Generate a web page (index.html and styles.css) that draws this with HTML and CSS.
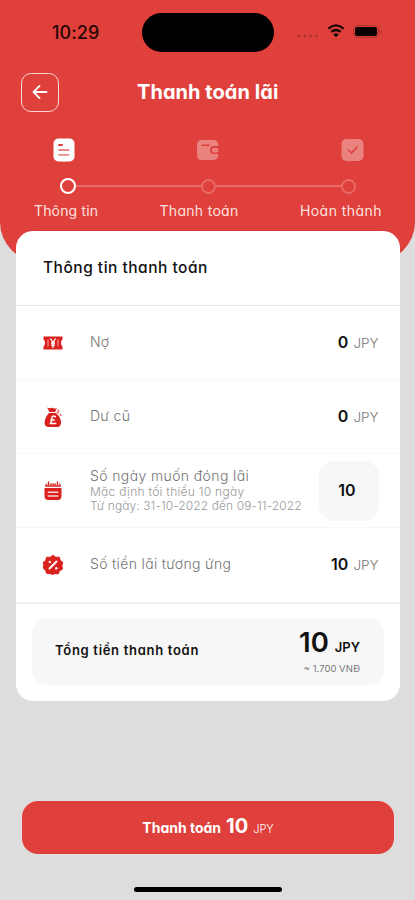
FILE: index.html
```html
<!DOCTYPE html>
<html lang="vi">
<head>
<meta charset="utf-8">
<title>Thanh toán lãi</title>
<link rel="stylesheet" href="styles.css">
</head>
<body>
<div class="screen">
  <header class="header">
    <div class="status">
      <span class="clock">10:29</span>
      <span class="island"></span>
      <span class="signals">
        <svg width="22" height="4" viewBox="0 0 22 4" fill="#a8302c"><circle cx="2" cy="2" r="1.3"/><circle cx="8" cy="2" r="1.3"/><circle cx="13.500" cy="2" r="1.300"/><circle cx="19.500" cy="2" r="1.300"/></svg>
        <svg class="wifi" width="18" height="14" viewBox="0 0 18 14" fill="none" stroke="#190605" stroke-width="2.300"><path d="M1.300 4.600Q9-1.800 16.700 4.600"/><path d="M4.200 7.900Q9 4 13.800 7.900"/><path d="M9 13.200 6.300 10.400Q9 8.300 11.700 10.400Z" fill="#190605" stroke="none"/></svg>
        <svg class="battery" width="29" height="13" viewBox="0 0 29 13"><rect x=".6" y=".6" width="24.800" height="11.800" rx="3.800" fill="none" stroke="#b53431" stroke-width="1.200"/><rect x="2" y="2" width="22" height="9" rx="2.500" fill="#080000"/><path d="M26.700 4.500q2 .5 2 2t-2 2z" fill="#b53431"/></svg>
      </span>
    </div>
    <div class="nav">
      <span class="back"><svg width="16" height="16" viewBox="0 0 16 16" fill="none" stroke="#fff" stroke-width="1.900" stroke-linecap="round" stroke-linejoin="round"><path d="M14.500 8H2M7.500 1.900 1.500 8l6 6.100"/></svg></span>
      <h1>Thanh toán lãi</h1>
    </div>
    <div class="step-icons">
      <svg width="22" height="24" viewBox="0 0 22 24"><rect x=".5" y=".5" width="21" height="23" rx="5" fill="#fff"/><path d="M6 7h3" stroke="#df403a" stroke-width="2" stroke-linecap="round"/><path d="M6 12h9.500M6 16.800h9.500" stroke="#e98b87" stroke-width="1.800" stroke-linecap="round"/></svg>
      <svg width="23" height="22" viewBox="0 0 23 22"><path d="M6 1h11q5 0 5.300 5v1H18q-4 0-4 4t4 4h4.300v1q-.3 5-5.300 5H6q-5 0-5-5V6q0-5 5-5z" fill="#ea827e"/><path d="M6 6.200h7" stroke="#df403a" stroke-width="1.500" stroke-linecap="round"/><rect x="16" y="9" width="6.500" height="4.500" rx="2" fill="#ea827e"/></svg>
      <svg width="23" height="24" viewBox="0 0 23 24"><rect x=".5" y="1" width="22" height="22" rx="5" fill="#ea827e"/><path d="m7.500 12 3 3 5.500-6" fill="none" stroke="#df403a" stroke-width="1.600" stroke-linecap="round" stroke-linejoin="round"/></svg>
    </div>
    <div class="track"><i class="dot on"></i><i class="line"></i><i class="dot"></i><i class="line"></i><i class="dot"></i></div>
    <div class="step-labels"><span class="l1">Thông tin</span><span class="l2">Thanh toán</span><span class="l3">Hoàn thành</span></div>
  </header>

  <main class="card">
    <h2><span>Thông tin thanh toán</span></h2>
    <div class="row">
      <svg class="icon" width="22" height="22" viewBox="0 0 22 22"><path d="M1.500 4.500h19v3q-1.500.5-1.500 3.500t1.500 3.500v3h-19v-3Q3 14 3 11T1.500 7.500z" fill="#da211d"/><path d="M6 7.500v7M16 7.500v7" stroke="#f6aaa7" stroke-width="1"/><path d="m8.500 6.500 2.500 4 2.500-4M11 10.500V16M9 11h4M9 13.200h4" fill="none" stroke="#fff" stroke-width="1.300"/></svg>
      <span class="name">Nợ</span>
      <span class="amount"><b>0</b><em>JPY</em></span>
    </div>
    <div class="row">
      <svg class="icon" width="22" height="22" viewBox="0 0 22 22"><path d="M5 1.500q2 1.300 3.500.5t3 .2q2 .8 3.500-.2l-2 4H7.500z" fill="#da211d"/><path d="M7 7h7q5.500 5 5 10.500-.3 3-3 3.500H6q-3-.5-3.300-3.500Q2.200 12 7 7z" fill="#da211d"/><path d="M13.800 11q-3.800-2.300-4 1.300.2 2.700-1.300 5.200h5.800M8.300 14h4.500" fill="none" stroke="#fff" stroke-width="1.500"/><path d="m15 6 1.500 1M18 8.500l1 .8M16 4l1 1" stroke="#e4524f" stroke-width="1.200" stroke-linecap="round"/></svg>
      <span class="name old">Dư cũ</span>
      <span class="amount"><b>0</b><em>JPY</em></span>
    </div>
    <div class="row">
      <svg class="icon" width="22" height="22" viewBox="0 0 22 22"><path d="M3 7V5.500Q3 3.500 5 3.500h12q2 0 2 2V7z" fill="#e4524f"/><path d="M6.500 2v3M15.500 2v3" stroke="#fff" stroke-width="2.600"/><path d="M6.500 2v2.500M15.500 2v2.500" stroke="#da211d" stroke-width="1.300" stroke-linecap="round"/><path d="M2.500 8h17v8q0 4-4 4h-9q-4 0-4-4z" fill="#da211d"/><path d="M6.200 12.200h9.600M6.200 16h9.600" stroke="#fbd5d3" stroke-width="1.400" stroke-linecap="round"/></svg>
      <span class="name"><span class="days">Số ngày muốn đóng lãi</span><small class="s1">Mặc định tối thiểu 10 ngày</small><small class="s2">Từ ngày: 31-10-2022 đến 09-11-2022</small></span>
      <span class="field">10</span>
    </div>
    <div class="row">
      <svg class="icon" width="22" height="22" viewBox="0 0 22 22"><path d="m11 1.300 2.800 2 3.500-.1 1 3.300 2.600 2-1.100 3.200.7 3.400-3 1.600-1.300 3.200-3.300-.4-2 .9-3-.8-3.300-.3-1-3L1.200 14l.7-3L1.100 8.500l2.600-2 1-3.300 3.500.1z" fill="#da211d" stroke="#da211d" stroke-width="1" stroke-linejoin="round"/><path d="m7.500 14.500 7-7" stroke="#fff" stroke-width="1.900" stroke-linecap="round"/><circle cx="7.800" cy="7.900" r="1.200" fill="#fff"/><circle cx="14.300" cy="14.200" r="1.200" fill="#fff"/></svg>
      <span class="name rate">Số tiền lãi tương ứng</span>
      <span class="amount"><b>10</b><em>JPY</em></span>
    </div>
    <div class="summary">
      <div class="total">
        <strong>Tổng tiền thanh toán</strong>
        <div class="sum"><div class="money"><b>10</b><em>JPY</em></div><small>~ 1.700 VNĐ</small></div>
      </div>
    </div>
  </main>

  <button class="pay"><span>Thanh toán</span><b>10</b><em>JPY</em></button>
  <div class="home"></div>
</div>
</body>
</html>
```

FILE: styles.css
```css
* { box-sizing: border-box; }
body {
  margin: 0;
  background: #ddd;
  font-family: Inter, "Noto Sans", sans-serif;
  font-feature-settings: "cv11";
  color: #111;
}
h1, h2 { margin: 0; }
em, i { font-style: normal; }
svg { display: block; flex: none; }
span, strong, b, em, small { white-space: nowrap; }
.screen { width: 415px; height: 900px; display: flex; flex-direction: column; overflow: hidden; }

.header {
  height: 262px;
  flex: none;
  background: #e0403b;
  border-radius: 0 0 40px 40px;
  color: #fff;
}
.status { height: 64px; display: flex; align-items: center; padding-left: 52px; }
.clock { width: 90px; font-size: 18px; font-weight: 500; color: #280706; letter-spacing: 0.1px; }
.island { width: 132px; height: 39px; border-radius: 20px; background: #000; }
.signals { display: flex; align-items: center; margin: -2px 0 0 23px; }
.signals > svg:first-child { margin-top: 10px; }
.wifi { margin-left: 8px; }
.battery { margin-left: 8px; }

.nav { height: 56px; display: flex; align-items: center; padding-left: 21px; }
.back {
  width: 38px;
  height: 39px;
  border: 1.5px solid #fbd5d3;
  border-radius: 10px;
  display: flex;
  align-items: center;
  justify-content: center;
}
.nav h1 { margin-left: 78px; font-size: 20px; line-height: 24px; font-weight: 700; letter-spacing: 0.05px; }

.step-icons { display: flex; justify-content: space-between; align-items: center; margin: 18px 51px 0 52.5px; height: 24px; }
.track { display: flex; align-items: center; padding: 0 59px 0 60px; height: 16px; margin-top: 16px; }
.dot { width: 15px; height: 15px; border: 2px solid #e96a65; border-radius: 50%; flex: none; }
.dot.on { width: 16px; height: 16px; border: 2.5px solid #fff; }
.line { flex: 1; height: 2px; background: #e96a65; }
.step-labels {
  display: flex;
  justify-content: space-between;
  margin: 8px 33px 0 34px;
  font-size: 14px;
  line-height: 18px;
  font-weight: 400;
  letter-spacing: 0.3px;
  color: #fde0df;
}
.l1 { letter-spacing: 0.15px; }
.l3 { letter-spacing: 0.45px; }

.card {
  flex: none;
  margin: -31px 15.5px 0 16px;
  height: 470px;
  background: #fff;
  border-radius: 17px;
}
.card h2 {
  height: 75px;
  padding: 27px 0 0 27px;
  font-size: 15.5px;
  line-height: 20px;
  font-weight: 500;
  letter-spacing: 0.5px;
  border-bottom: 1.5px solid #e6e6e6;
}
.row { height: 74px; display: flex; align-items: center; padding: 0 21px 0 26px; border-bottom: 1px solid #f8f8f8; }
.row:nth-of-type(4) { border-bottom: 0; }
.icon { margin-right: 26px; }
.name { flex: 1; font-size: 14px; line-height: 18px; font-weight: 300; color: #747474; display: flex; flex-direction: column; padding-bottom: 2px; }
.name small { font-size: 12px; line-height: 13.500px; color: #999; }
.old { letter-spacing: 0.3px; }
.days { letter-spacing: 0.38px; }
.name .s1 { letter-spacing: 0.27px; }
.name .s2 { letter-spacing: 0.09px; }
.rate { letter-spacing: 0.34px; }
.amount { display: flex; align-items: baseline; gap: 5px; padding-bottom: 2px; }
.amount b { font-size: 16px; font-weight: 600; }
.amount em { font-size: 13.5px; font-weight: 300; color: #777; }
.field {
  width: 60px;
  height: 60px;
  border-radius: 15px;
  background: #f7f7f7;
  display: flex;
  align-items: center;
  justify-content: center;
  font-size: 16px;
  font-weight: 600;
  padding: 0 3px 2px 0;
}
.summary { border-top: 2px solid #eee; padding: 14px 15.500px 0 16px; }
.total {
  height: 67px;
  border-radius: 15px;
  background: #f7f7f7;
  display: flex;
  align-items: center;
  justify-content: space-between;
  padding: 0 24px 2px 23px;
}
.total strong { font-size: 13px; font-weight: 600; letter-spacing: 0.7px; padding-bottom: 1px; }
.sum { display: flex; flex-direction: column; align-items: flex-end; padding-top: 2px; }
.money { display: flex; align-items: baseline; gap: 6px; line-height: 29px; }
.money b { font-size: 27.5px; font-weight: 600; }
.money em { font-size: 13px; font-weight: 600; }
.sum small { font-size: 9.5px; line-height: 13px; color: #777; }

.pay {
  flex: none;
  margin: 100px 21px 0 22px;
  height: 53px;
  border: 0;
  border-radius: 16px;
  background: #e0403b;
  color: #fff;
  font: inherit;
  font-feature-settings: "cv11";
  display: flex;
  align-items: baseline;
  justify-content: center;
  gap: 5px;
  padding: 0;
  line-height: 51px;
}
.pay span { font-size: 14px; font-weight: 700; }
.pay b { font-size: 20px; font-weight: 700; }
.pay em { font-size: 11px; font-weight: 300; }
.home { flex: none; width: 148px; height: 5px; border-radius: 3px; background: #000; margin: 33px 0 0 134px; }
```
